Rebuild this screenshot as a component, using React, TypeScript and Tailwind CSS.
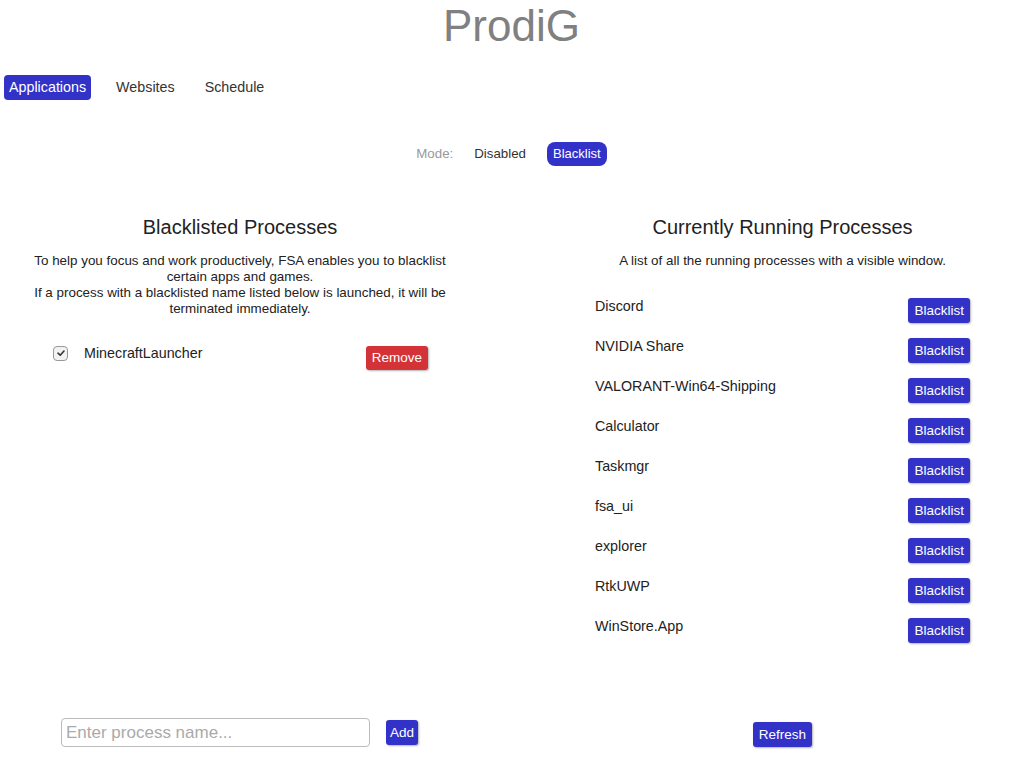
import React from 'react'

const running = [
  'Discord',
  'NVIDIA Share',
  'VALORANT-Win64-Shipping',
  'Calculator',
  'Taskmgr',
  'fsa_ui',
  'explorer',
  'RtkUWP',
  'WinStore.App',
]

const btn = 'bg-[#3232c8] text-white text-[13.5px] leading-[25px] h-[25px] px-[6px] rounded-[3px] shadow-[1px_1px_2px_rgba(0,0,0,0.3)]'

const App = () => {
  return (
    <div className="h-[768px] w-full bg-white text-[#222] flex flex-col font-['Liberation_Sans',Arial,sans-serif] overflow-hidden">
      <h1 className="text-center text-[44px] leading-[52px] text-[#808080]">ProdiG</h1>

      <div className="flex items-center gap-5 px-1 mt-[23px]">
        <button className="bg-[#3232c8] text-white text-[14.3px] h-[25px] px-[5px] rounded-[4px]">Applications</button>
        <button className="text-[14.3px] h-[25px] px-[5px] text-[#333]">Websites</button>
        <button className="text-[14.3px] h-[25px] px-[5px] text-[#333]">Schedule</button>
      </div>

      <div className="flex justify-center items-center gap-[21px] mt-[42px] text-[13.3px]">
        <span className="text-[#999]">Mode:</span>
        <span className="text-[#333]">Disabled</span>
        <span className="bg-[#3232c8] text-white text-[13px] h-[24px] leading-[24px] px-[6px] rounded-lg">Blacklist</span>
      </div>

      <div className="flex flex-1 mt-[50px] pb-[21px]">
        <div className="w-[420px] ml-[30px] flex flex-col">
          <h2 className="text-center text-[20px] leading-[22px] text-[#222]">Blacklisted Processes</h2>
          <p className="text-center text-[13.4px] leading-[16px] mt-[15px] text-[#222]">
            To help you focus and work productively, FSA enables you to blacklist certain apps and games.
            <br />
            If a process with a blacklisted name listed below is launched, it will be terminated immediately.
          </p>
          <div className="flex items-start justify-between pl-[23px] pr-[22px] mt-[29px]">
            <div className="flex items-center gap-[16px] mt-[-1px]">
              <span className="w-[15px] h-[15px] rounded-[4px] border border-[#999] bg-[#f2f2f2] flex items-center justify-center">
                <svg width="10" height="10" viewBox="0 0 10 10">
                  <path d="M2 5.2 L4.2 7.2 L8 3" fill="none" stroke="#333" strokeWidth="1.6" strokeLinecap="round" strokeLinejoin="round" />
                </svg>
              </span>
              <span className="text-[14.3px] leading-[16px] text-[#222]">MinecraftLauncher</span>
            </div>
            <button className="bg-[#d33336] text-white text-[13.5px] h-[24px] px-[6px] rounded-[3px] shadow-[1px_1px_2px_rgba(0,0,0,0.3)]">Remove</button>
          </div>
          <div className="mt-auto flex items-center ml-[31px] gap-[16px]">
            <input
              placeholder="Enter process name..."
              className="w-[309px] h-[29px] border border-[#bbb] rounded-[4px] px-[4px] text-[17px] placeholder:text-[#aaa] outline-none"
            />
            <button className={btn.replace('px-[6px]', 'px-[4px]')}>Add</button>
          </div>
        </div>

        <div className="w-[415px] ml-[125px] flex flex-col">
          <h2 className="text-center text-[20px] leading-[22px] text-[#222]">Currently Running Processes</h2>
          <p className="text-center text-[13.4px] leading-[16px] mt-[15px] text-[#222]">
            A list of all the running processes with a visible window.
          </p>
          <div className="flex flex-col gap-[15px] px-5 mt-[29px]">
            {running.map((name) => (
              <div key={name} className="flex items-start justify-between">
                <span className="text-[14.3px] leading-[16px] text-[#222]">{name}</span>
                <button className={btn}>Blacklist</button>
              </div>
            ))}
          </div>
          <div className="mt-auto flex justify-center">
            <button className={btn}>Refresh</button>
          </div>
        </div>
      </div>
    </div>
  )
}

export default App
